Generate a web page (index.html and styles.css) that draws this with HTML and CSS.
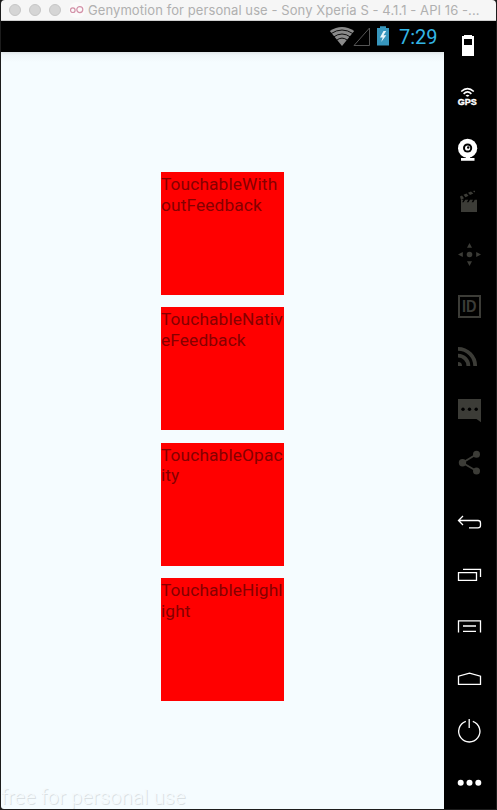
FILE: index.html
```
<!DOCTYPE html>
<html lang="en">
<head>
<meta charset="utf-8">
<title>Genymotion</title>
<link rel="stylesheet" href="styles.css">
</head>
<body>
<div class="window">
  <header class="titlebar">
    <span class="light"></span><span class="light"></span><span class="light"></span>
    <svg class="logo" width="16" height="16" viewBox="0 0 16 16"><circle cx="8" cy="8" r="8" fill="#fbfafa"/><g fill="none" stroke="#d391a8" stroke-width="1.2"><circle cx="3.8" cy="8.2" r="2.3"/><circle cx="10.8" cy="7.6" r="3"/></g></svg>
    <span class="title">Genymotion for personal use - Sony Xperia S - 4.1.1 - API 16 -...</span>
  </header>
  <div class="body">
    <main class="device">
      <div class="status">
        <svg width="68" height="31" viewBox="0 0 68 31">
          <path d="M.8 10Q13 2.2 25.2 10L13 25Z" fill="#8a8a8a"/>
          <g fill="none" stroke="#000" stroke-width=".9"><path d="M2 12.6Q13 5.4 24 12.6"/><path d="M4.5 16Q13 10 21.5 16"/><path d="M7.4 19.4Q13 14.8 18.6 19.4"/></g>
          <path d="M25 24.5H40.5V7Z" fill="none" stroke="#555"/>
          <path d="M48 7H51V5.3H57V7H60V24.5H48Z" fill="#3796bd"/>
          <path d="M54.5 10L51 16.5H53.7L52.2 21L57.3 14.3H54.5L57.2 10Z" fill="#e8f6fb"/>
        </svg>
        <span class="clock">7:29</span>
      </div>
      <div class="screen">
        <div class="tile">TouchableWith<br>outFeedback</div>
        <div class="tile">TouchableNativ<br>eFeedback</div>
        <div class="tile">TouchableOpac<br>ity</div>
        <div class="tile">TouchableHighl<br>ight</div>
      </div>
      <div class="watermark">free for personal use</div>
    </main>
    <aside class="tools">
      <div class="group">
        <svg class="on" viewBox="0 0 52 52"><path fill-rule="evenodd" d="M20 14H28V15H30V35H18V15H20ZM20 18V24H28V18Z"/></svg>
        <svg class="on" viewBox="0 0 52 52"><g class="line"><path d="M17.2 18.5Q23.5 12.6 29.8 18.5M19.6 20.9Q23.5 17 27.4 20.9"/></g><path d="M21.5 22.8Q23.5 20.8 25.5 22.8L23.5 23.8Z"/><text class="gps" x="13.7" y="32.2" textLength="19" lengthAdjust="spacingAndGlyphs">GPS</text></svg>
        <svg class="on" viewBox="0 0 52 52"><circle cx="23.6" cy="23.3" r="9.6"/><path d="M22 31H26V33H30.5V35.7H17V33H22Z"/><circle cx="23.6" cy="23" r="4.6" fill="#000"/><circle cx="23.6" cy="23" r="2.6"/><circle cx="24.2" cy="22.5" r="1.2" fill="#000"/></svg>
        <svg viewBox="0 0 52 52"><path d="M17 25.3H33V35H17ZM16 19.5L18 18.5L20 21.3L17 22.8ZM19.5 17.8L22.5 16.4L24.5 18.8L21.5 20.3ZM24 15.8L27 14.5L29.3 16.4L26 18ZM28.6 14L31 13.7V15.6ZM17 22.8H19.5L18 25.5H17ZM21.2 22.8H24.2L22.7 25.5H19.5ZM26 22.8H29L27.5 25.5H24.3ZM30.7 22.8H33V25.5H29.2Z"/></svg>
        <svg viewBox="0 0 52 52"><circle cx="25.5" cy="25.5" r="2.8"/><path d="M25.5 14L28 18.8H23ZM25.5 37L28 32.2H23ZM14 25.5L18.8 23V28ZM37 25.5L32.2 23V28Z"/></svg>
        <svg viewBox="0 0 52 52"><path fill-rule="evenodd" d="M14 14H37V37H14ZM16 16V35H35V16Z"/><text class="id" x="18" y="31.3" textLength="14.5" lengthAdjust="spacingAndGlyphs">ID</text></svg>
        <svg viewBox="0 0 52 52"><path d="M14 29A4 4 0 0 1 18 33H14Z"/><path fill="none" stroke="#3c3c37" stroke-width="3.8" d="M14 22.6A10.4 10.4 0 0 1 24.4 33M14 15.8A17.2 17.2 0 0 1 31.2 33"/></svg>
        <svg viewBox="0 0 52 52"><path d="M14 14H37V37.2L32.5 34H14Z"/><g fill="#000"><circle cx="19" cy="24.3" r="1.7"/><circle cx="25.5" cy="24.3" r="1.7"/><circle cx="32.2" cy="24.3" r="1.7"/></g></svg>
        <svg viewBox="0 0 52 52"><path fill="none" stroke="#3c3c37" stroke-width="1.8" d="M32.5 17.3L18.5 25.7L32.5 34"/><circle cx="18.5" cy="25.7" r="3.7"/><circle cx="32.5" cy="17.3" r="3.5"/><circle cx="32.5" cy="34" r="3.5"/></svg>
      </div>
      <div class="group nav">
        <svg viewBox="0 0 52 52"><path d="M19 19L14.5 23.5L19 28M15 23.5H34Q36.5 23.5 36.5 26V28.5Q36.5 30.8 34 30.8H25"/></svg>
        <svg viewBox="0 0 52 52"><path d="M14.5 23.7H32.5V31.3H14.5ZM19 20.3H36.5V28"/></svg>
        <svg viewBox="0 0 52 52"><path d="M14.5 31.5V19.8H36.5V31.5M19 25H32M19 30.3H32"/></svg>
        <svg viewBox="0 0 52 52"><path d="M14.5 31.3V23.2L25.5 20.2L36.5 23.2V31.3Z"/></svg>
        <svg viewBox="0 0 52 52"><path d="M21.8 16.4A10.6 10.6 0 1 0 28.8 16.4M25.2 14V23"/></svg>
        <svg class="dots" viewBox="0 0 52 52"><circle cx="16.7" cy="25.7" r="3"/><circle cx="25.5" cy="25.7" r="3"/><circle cx="34.3" cy="25.7" r="3"/></svg>
      </div>
    </aside>
  </div>
</div>
</body>
</html>
```
FILE: styles.css
```
* { box-sizing: border-box; }
body { margin: 0; background: #1c1c1c; }
.window {
  width: 497px;
  height: 810px;
  padding: 0 1px 1px;
  display: flex;
  flex-direction: column;
}
.titlebar {
  height: 21px;
  display: flex;
  align-items: center;
  padding: 0 0 1px 8px;
  background: #f6f6f6;
  border-bottom: 1px solid #cfcfcf;
  border-radius: 4px 4px 0 0;
}
.light {
  width: 12px;
  height: 12px;
  margin-right: 8px;
  border-radius: 50%;
  background: #d5d5d5;
  border: 1px solid #c6c6c6;
}
.logo { margin-right: 3px; }
.title {
  padding-top: 1px;
  font: 13px/19px Inter, sans-serif;
  letter-spacing: .08px;
  color: #b0b0b0;
  white-space: nowrap;
}
.body { flex: 1; display: flex; }
.device {
  width: 443px;
  display: flex;
  flex-direction: column;
  background: #f5fcff;
  border-radius: 0 0 0 3px;
}
.status {
  height: 31px;
  display: flex;
  justify-content: flex-end;
  align-items: center;
  padding-right: 6px;
  background: #000;
}
.status svg { margin-right: 2px; }
.clock {
  width: 39px;
  padding-top: 2px;
  font: 20px/31px Roboto, sans-serif;
  color: #33b5e5;
}
.screen {
  flex: 1;
  display: flex;
  flex-direction: column;
  align-items: center;
  gap: 12.4px;
  padding-top: 120px;
  background: linear-gradient(#dfe5e8, #eef5f8 3px, #f5fcff 10px);
}
.tile {
  width: 123px;
  height: 123px;
  padding-top: 2px;
  background: #f00;
  color: #850000;
  font: 17.3px/20.5px Roboto, sans-serif;
  letter-spacing: .13px;
  white-space: nowrap;
}
.watermark {
  height: 24px;
  font: 300 20px/24px Roboto, sans-serif;
  letter-spacing: .2px;
  color: #f5fafc;
  text-shadow: 1px 1px 0 #dae0e3;
}
.tools {
  width: 52px;
  display: flex;
  flex-direction: column;
  justify-content: space-between;
  background: #000;
}
.group { display: flex; flex-direction: column; fill: #3c3c37; }
.group svg { display: block; width: 52px; height: 52px; }
.group .on { fill: #fff; }
.line { fill: none; stroke: #fff; stroke-width: 1.6; }
.gps { font: bold 9px "Liberation Sans", sans-serif; stroke: #fff; stroke-width: .4px; }
.id { font: bold 16px "Liberation Sans", sans-serif; }
.nav { fill: none; stroke: #fff; stroke-width: 1.3; }
.nav .dots { fill: #fff; stroke: none; }
```
